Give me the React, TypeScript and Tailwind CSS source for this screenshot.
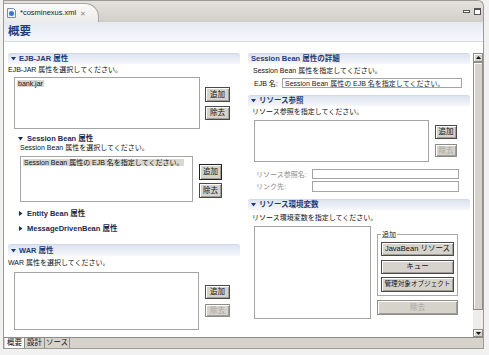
import type { ReactNode } from "react";
import clsx from "clsx";
import { twMerge } from "tailwind-merge";

const Down = ({ color = "#1f3a78" }: { color?: string }) => (
  <svg width="5" height="4" viewBox="0 0 5 4">
    <path d="M0 0h5L2.5 3.5z" fill={color} />
  </svg>
);

const Right = () => (
  <svg width="4" height="5" viewBox="0 0 4 5">
    <path d="M0 0v5l3.5-2.5z" fill="#1a2a50" />
  </svg>
);

const Bar = ({ title, arrow = true, className }: { title: string; arrow?: boolean; className?: string }) => (
  <div
    className={twMerge(
      "flex h-[11px] items-center gap-[3px] rounded-t-[3px] border-t border-[#cfd8e7] bg-linear-to-b from-[#dde4f0] to-[#f5f7fb] pl-[3px] text-[7.5px] font-bold text-[#1f3a78]",
      className,
    )}
  >
    {arrow && <Down />}
    <span>{title}</span>
  </div>
);

const Btn = ({ children, disabled, className }: { children: ReactNode; disabled?: boolean; className?: string }) => (
  <button
    type="button"
    className={twMerge(
      clsx(
        "flex items-center justify-center overflow-hidden whitespace-nowrap border bg-[#d6d3cc] text-[7.5px] shadow-[inset_1px_1px_0_#fff,inset_-1px_-1px_0_#a19e97]",
        disabled ? "border-[#8e8c87] text-[#a8a59e]" : "border-[#4a4a4a] text-[#111]",
      ),
      className,
    )}
  >
    {children}
  </button>
);

const List = ({ className, children }: { className?: string; children?: ReactNode }) => (
  <div className={clsx("border border-[#a4a4a4] bg-white p-[2px]", className)}>{children}</div>
);

const Input = ({ className, value }: { className?: string; value?: string }) => (
  <div className={twMerge("flex h-[10px] items-center whitespace-nowrap border border-[#a4a4a4] bg-white pl-[2px] text-[7px] text-[#222]", className)}>
    {value}
  </div>
);

const App = () => {
  return (
    <div className="h-[355px] w-[489px] overflow-hidden bg-[#f1f1f1] font-['Liberation_Sans','Noto_Sans_CJK_JP',sans-serif] text-[7px] leading-none text-[#111]">
      <div className="ml-[3px] flex h-[349px] w-[481px] flex-col">
        {/* editor tab strip */}
        <div className="flex h-[22px] items-end rounded-tr-[6px] border border-b-0 border-[#9c9a95] bg-linear-to-b from-[#e4e2de] to-[#d2cec8]">
          <div className="flex h-[19px] w-[95px] items-center gap-[4px] rounded-tr-[14px] border-r border-t border-[#a9a7a2] bg-linear-to-b from-[#fbfbfa] to-[#ecebe8] pl-[3px]">
            <svg width="9" height="10" viewBox="0 0 9 10">
              <path d="M0.5 0.5h6l2 2v7h-8z" fill="#eef3fb" stroke="#7b8ca8" />
              <circle cx="4.5" cy="5.5" r="2.5" fill="#3d78c8" />
            </svg>
            <span className="text-[7.5px] text-[#222]">*cosminexus.xml</span>
            <span className="text-[7px] text-[#8a8a8a]">✕</span>
          </div>
          <div className="ml-auto mb-[7px] mr-[2px] flex items-center gap-[4px]">
            <div className="h-[3px] w-[7px] border border-[#555] bg-white" />
            <div className="h-[7px] w-[7px] border border-[#555] border-t-2 bg-white" />
          </div>
        </div>

        {/* content frame */}
        <div className="flex flex-1 flex-col border border-t-0 border-[#9c9a95] bg-white">
          <div className="flex h-[20px] items-center border-b border-[#d6dce6] bg-linear-to-b from-[#e5eaf2] to-[#f6f8fb] pl-[4px] text-[11.5px] font-bold text-[#243f78]">
            概要
          </div>

          <div className="flex flex-1">
            {/* left column */}
            <div className="ml-[4px] flex w-[232px] flex-col">
              <Bar title="EJB-JAR 属性" className="mt-[11px]" />
              <div className="mt-[2px] h-[9px]">EJB-JAR 属性を選択してください。</div>
              <div className="mt-[2px] flex">
                <List className="ml-[6px] h-[52px] w-[186px]">
                  <span className="bg-[#d9d7d2] px-[1px]">bank.jar</span>
                </List>
                <div className="ml-[5px] flex flex-col">
                  <Btn className="mt-[10px] h-[15px] w-[25px]">追加</Btn>
                  <Btn className="mt-[4px] h-[14px] w-[25px]">除去</Btn>
                </div>
              </div>

              <div className="mt-[5px] ml-[10px] flex h-[9px] items-center gap-[4px] text-[7.5px] font-bold text-[#1a2a50]">
                <Down color="#1a2a50" />
                <span>Session Bean 属性</span>
              </div>
              <div className="ml-[12px] h-[9px] pt-[1px]">Session Bean 属性を選択してください。</div>
              <div className="mt-[4px] flex">
                <List className="ml-[12px] h-[46px] w-[173px]">
                  <span className="bg-[#d9d7d2] px-[1px]">Session Bean 属性の EJB 名を指定してください。</span>
                </List>
                <div className="ml-[6px] flex flex-col">
                  <Btn className="mt-[8px] h-[16px] w-[23px] border-[#222]">追加</Btn>
                  <Btn className="mt-[3px] h-[15px] w-[23px]">除去</Btn>
                </div>
              </div>

              <div className="mt-[7px] ml-[11px] flex h-[9px] items-center gap-[4px] text-[7.5px] font-bold text-[#1a2a50]">
                <Right />
                <span>Entity Bean 属性</span>
              </div>
              <div className="mt-[6px] ml-[11px] flex h-[9px] items-center gap-[4px] text-[7.5px] font-bold text-[#1a2a50]">
                <Right />
                <span>MessageDrivenBean 属性</span>
              </div>

              <Bar title="WAR 属性" className="mt-[11px] h-[12px]" />
              <div className="mt-[3px] h-[9px]">WAR 属性を選択してください。</div>
              <div className="mt-[4px] flex">
                <List className="ml-[6px] h-[58px] w-[185px]" />
                <div className="ml-[6px] flex flex-col">
                  <Btn className="mt-[13px] h-[14px] w-[25px]">追加</Btn>
                  <Btn disabled className="mt-[5px] h-[13px] w-[25px]">除去</Btn>
                </div>
              </div>
            </div>

            {/* right column */}
            <div className="ml-[8px] flex w-[222px] flex-col">
              <Bar title="Session Bean 属性の詳細" arrow={false} className="mt-[11px]" />
              <div className="mt-[3px] ml-[5px] h-[9px]">Session Bean 属性を指定してください。</div>
              <div className="mt-[2px] flex items-center">
                <span className="ml-[6px] w-[28px]">EJB 名:</span>
                <Input className="w-[180px]" value="Session Bean 属性の EJB 名を指定してください。" />
              </div>

              <Bar title="リソース参照" className="mt-[7px]" />
              <div className="mt-[2px] ml-[4px] h-[9px]">リソース参照を指定してください。</div>
              <div className="mt-[3px] flex">
                <List className="ml-[6px] h-[42px] w-[175px]" />
                <div className="ml-[6px] flex flex-col">
                  <Btn className="mt-[5px] h-[14px] w-[22px]">追加</Btn>
                  <Btn disabled className="mt-[5px] h-[13px] w-[22px]">除去</Btn>
                </div>
              </div>
              <div className="mt-[7px] flex items-center text-[#8c8c8c]">
                <span className="ml-[8px] w-[56px]">リソース参照名:</span>
                <Input className="w-[147px]" />
              </div>
              <div className="mt-[2px] flex items-center text-[#8c8c8c]">
                <span className="ml-[8px] w-[56px]">リンク先:</span>
                <Input className="h-[11px] w-[147px]" />
              </div>

              <Bar title="リソース環境変数" className="mt-[7px]" />
              <div className="mt-[4px] ml-[4px] h-[9px]">リソース環境変数を指定してください。</div>
              <div className="mt-[3px] flex">
                <List className="ml-[6px] h-[93px] w-[117px]" />
                <div className="ml-[6px] flex w-[81px] flex-col">
                  <div className="relative mt-[8px] flex h-[62px] flex-col border border-[#a8a8a8] px-[3px] pt-[7px]">
                    <span className="absolute -top-[4px] left-[3px] bg-white px-[1px]">追加</span>
                    <Btn className="h-[14px] w-[73px]">JavaBean リソース</Btn>
                    <Btn className="mt-[4px] h-[14px] w-[73px]">キュー</Btn>
                    <Btn className="mt-[3px] h-[15px] w-[73px] text-[6.6px]">管理対象オブジェクト</Btn>
                  </div>
                  <Btn disabled className="mt-[4px] h-[15px] w-[81px]">除去</Btn>
                </div>
              </div>
            </div>

            {/* scrollbar */}
            <div className="ml-[3px] mt-[11px] flex w-[10px] flex-col">
              <div className="flex h-[9px] items-center justify-center border border-[#8d8b86] bg-[#d6d3cc] shadow-[inset_1px_1px_0_#fff]">
                <svg width="5" height="3" viewBox="0 0 5 3">
                  <path d="M0 3h5L2.5 0z" fill="#111" />
                </svg>
              </div>
              <div className="h-[248px] border border-[#8d8b86] bg-[#d6d3cc] shadow-[inset_1px_1px_0_#fff]" />
              <div className="flex-1 bg-[#eeede9]" />
              <div className="flex h-[8px] items-center justify-center border border-[#8d8b86] bg-[#d6d3cc] shadow-[inset_1px_1px_0_#fff]">
                <svg width="5" height="3" viewBox="0 0 5 3">
                  <path d="M0 0h5L2.5 3z" fill="#111" />
                </svg>
              </div>
            </div>
          </div>

          {/* bottom tabs */}
          <div className="flex h-[11px] whitespace-nowrap border-t border-[#8d8b86] bg-[#d6d3cc] pl-[1px] text-[7.5px]">
            <div className="flex w-[20px] items-center justify-center border-r border-[#8d8b86] bg-white">概要</div>
            <div className="flex w-[20px] items-center justify-center border-r border-[#8d8b86]">設計</div>
            <div className="flex w-[25px] items-center justify-center border-r border-[#8d8b86]">ソース</div>
          </div>
        </div>
      </div>
    </div>
  );
};

export default App;
